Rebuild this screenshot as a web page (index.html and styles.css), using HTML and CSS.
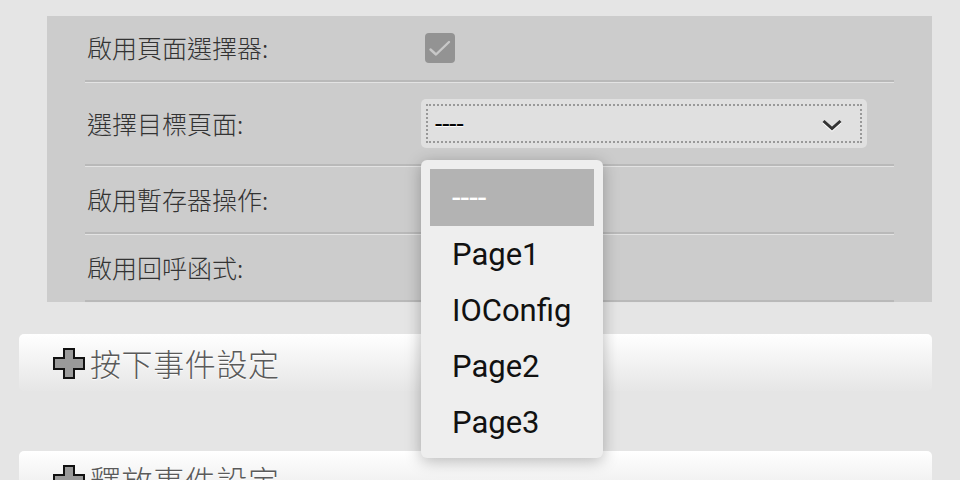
FILE: index.html
```html
<!DOCTYPE html>
<html lang="zh-Hant">
<head>
<meta charset="utf-8">
<title>設定</title>
<link rel="stylesheet" href="styles.css">
</head>
<body>
<div class="page">
  <div class="panel">
    <div class="row">
      <div class="label">啟用頁面選擇器:</div>
      <div class="control">
        <span class="checkbox">
          <svg width="30" height="30" viewBox="0 0 30 30"><path d="M5.5 16.5 L11 21.5 L24 9" fill="none" stroke="#c8c8c8" stroke-width="2.4" stroke-linecap="round" stroke-linejoin="round"/></svg>
        </span>
      </div>
    </div>
    <div class="row">
      <div class="label">選擇目標頁面:</div>
      <div class="control">
        <div class="select">
          <div class="select-inner">
            <span class="select-value">----</span>
            <svg class="chevron" width="22" height="14" viewBox="0 0 22 14"><path d="M2.5 3 L11 10.5 L19.5 3" fill="none" stroke="#fff" stroke-width="3" transform="translate(0 1.2)"/><path d="M2.5 3 L11 10.5 L19.5 3" fill="none" stroke="#333" stroke-width="3"/></svg>
          </div>
          <ul class="dropdown">
            <li class="option selected">----</li>
            <li class="option">Page1</li>
            <li class="option">IOConfig</li>
            <li class="option">Page2</li>
            <li class="option">Page3</li>
          </ul>
        </div>
      </div>
    </div>
    <div class="row">
      <div class="label">啟用暫存器操作:</div>
      <div class="control"></div>
    </div>
    <div class="row">
      <div class="label">啟用回呼函式:</div>
      <div class="control"></div>
    </div>
  </div>

  <div class="section">
    <svg class="plus" width="32" height="31" viewBox="0 0 32 31"><path d="M11 1 H21 V10 H31 V21 H21 V30 H11 V21 H1 V10 H11 Z" fill="#9a9a9a" stroke="#111" stroke-width="2"/></svg>
    <span class="section-title">按下事件設定</span>
  </div>
  <div class="section">
    <svg class="plus" width="32" height="31" viewBox="0 0 32 31"><path d="M11 1 H21 V10 H31 V21 H21 V30 H11 V21 H1 V10 H11 Z" fill="#9a9a9a" stroke="#111" stroke-width="2"/></svg>
    <span class="section-title">釋放事件設定</span>
  </div>
</div>
</body>
</html>
```

FILE: styles.css
```css
html, body {
  margin: 0;
  padding: 0;
  background: #e5e5e5;
  overflow: hidden;
}

.page {
  padding: 16px 28px 0 19px;
  font-family: "Noto Sans CJK TC", "Noto Sans", sans-serif;
}

.panel {
  margin-left: 28px;
  background: #cccccc;
  padding: 0 38px;
}

.row {
  display: flex;
  align-items: center;
  padding: 16px 0;
  border-bottom: 2px solid #b9b9b9;
  box-shadow: 0 1px 0 #e3e3e3;
  margin-bottom: 1px;
}

.row:first-child {
  padding-top: 15px;
}

.row:last-child {
  margin-bottom: 0;
}

.label {
  width: 336px;
  flex: none;
  padding-left: 2px;
  box-sizing: border-box;
  font-size: 25px;
  line-height: 33px;
  color: #333;
  font-weight: 300;
}

.control {
  flex: 1;
  display: flex;
  align-items: center;
  min-height: 33px;
  padding-right: 27px;
}

.checkbox {
  display: block;
  width: 30px;
  height: 30px;
  margin-left: 4px;
  background: #939393;
  border-radius: 4px;
}

.checkbox svg {
  display: block;
}

.select {
  position: relative;
  flex: 1;
  background: #e0e0e0;
  border-radius: 5px;
  padding: 5px;
}

.select-inner {
  display: flex;
  align-items: center;
  justify-content: space-between;
  height: 35px;
  border: 2px dotted #999;
  padding: 0 17px 0 7px;
}

.select-value {
  font-family: Roboto, "Liberation Sans", sans-serif;
  font-size: 26px;
  line-height: 30px;
  color: #000;
  text-shadow: 0 1px 0 #fff;
}

.chevron {
  display: block;
  margin-top: 2px;
}

.dropdown {
  position: absolute;
  left: 0;
  top: calc(100% + 12px);
  width: 182px;
  box-sizing: border-box;
  margin: 0;
  padding: 9px 9px 8px;
  list-style: none;
  background: #eeeeee;
  border-radius: 6px;
  box-shadow: 0 3px 16px rgba(0, 0, 0, 0.28);
  z-index: 5;
}

.option {
  height: 56px;
  display: flex;
  align-items: center;
  padding-left: 22px;
  font-family: Roboto, "Liberation Sans", sans-serif;
  font-size: 31px;
  color: #111;
}

.option.selected {
  height: 57px;
  background: #b3b3b3;
  color: #fff;
}

.section {
  display: flex;
  align-items: center;
  height: 57px;
  margin-top: 32px;
  padding-left: 34px;
  border-radius: 5px;
  background: linear-gradient(to bottom, #ffffff 0%, #f6f6f6 35%, #e6e6e6 100%);
}

.section + .section {
  margin-top: 60px;
}

.plus {
  display: block;
  flex: none;
  margin-top: 2px;
}

.section-title {
  margin-left: 5px;
  font-size: 31px;
  line-height: 40px;
  color: #5a5a5a;
  letter-spacing: 0.6px;
  text-shadow: 0 1px 1px #fff;
  font-weight: 300;
}
```
